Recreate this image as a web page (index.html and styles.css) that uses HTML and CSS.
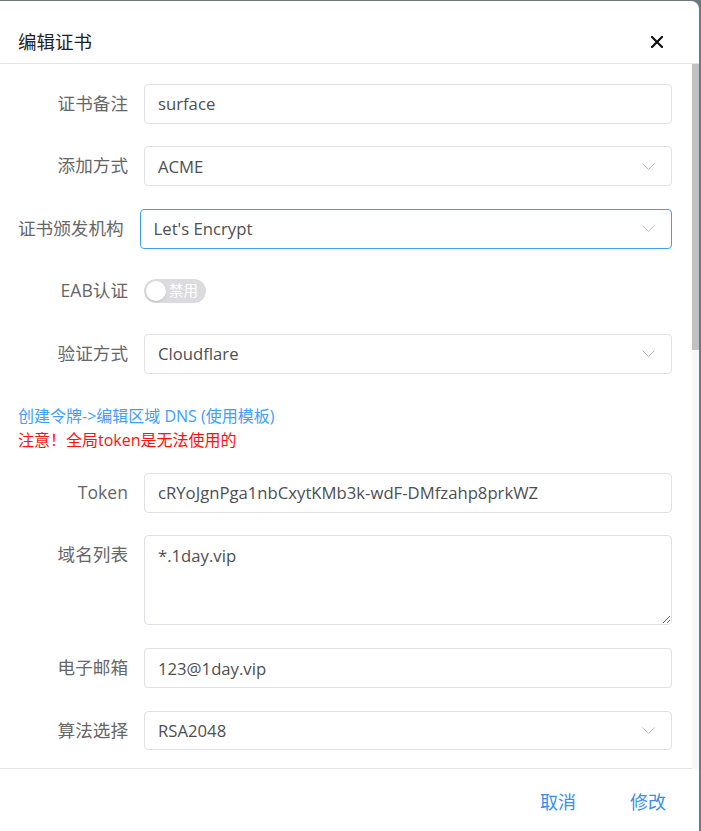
FILE: index.html
```html
<!doctype html>
<html>

<head>
    <meta charset="utf-8">
    <title>编辑证书</title>
    <link rel="stylesheet" href="styles.css">
</head>

<body>
    <div class="dialog">
        <div class="dialog-header">
            <span class="dialog-title">编辑证书</span>
            <span class="close">
                <svg width="12" height="12" viewBox="0 0 12 12">
                    <path d="M1 1L11 11M11 1L1 11" stroke="#111" stroke-width="2.2" stroke-linecap="square" fill="none" />
                </svg>
            </span>
        </div>

        <div class="dialog-body">
            <div class="form">
                <div class="row">
                    <div class="label">证书备注</div>
                    <div class="field">surface</div>
                </div>
                <div class="row">
                    <div class="label">添加方式</div>
                    <div class="field select">
                        <span>ACME</span>
                        <svg class="arrow" width="13" height="7" viewBox="0 0 13 7"><path d="M0.5 0.5L6.5 6.5L12.5 0.5" /></svg>
                    </div>
                </div>
                <div class="row">
                    <div class="label long">证书颁发机构</div>
                    <div class="field select focus">
                        <span>Let's Encrypt</span>
                        <svg class="arrow" width="13" height="7" viewBox="0 0 13 7"><path d="M0.5 0.5L6.5 6.5L12.5 0.5" /></svg>
                    </div>
                </div>
                <div class="row">
                    <div class="label">EAB认证</div>
                    <div class="switch">
                        <span class="knob"></span>
                        <span class="switch-text">禁用</span>
                    </div>
                </div>
                <div class="row">
                    <div class="label">验证方式</div>
                    <div class="field select">
                        <span>Cloudflare</span>
                        <svg class="arrow" width="13" height="7" viewBox="0 0 13 7"><path d="M0.5 0.5L6.5 6.5L12.5 0.5" /></svg>
                    </div>
                </div>

                <div class="notes">
                    <div class="note-link">创建令牌-&gt;编辑区域 DNS (使用模板)</div>
                    <div class="note-warn">注意！全局token是无法使用的</div>
                </div>

                <div class="row">
                    <div class="label">Token</div>
                    <div class="field">cRYoJgnPga1nbCxytKMb3k-wdF-DMfzahp8prkWZ</div>
                </div>
                <div class="row top">
                    <div class="label">域名列表</div>
                    <textarea class="textarea" readonly>*.1day.vip</textarea>
                </div>
                <div class="row">
                    <div class="label">电子邮箱</div>
                    <div class="field">123@1day.vip</div>
                </div>
                <div class="row">
                    <div class="label">算法选择</div>
                    <div class="field select">
                        <span>RSA2048</span>
                        <svg class="arrow" width="13" height="7" viewBox="0 0 13 7"><path d="M0.5 0.5L6.5 6.5L12.5 0.5" /></svg>
                    </div>
                </div>
            </div>
        </div>

        <!-- scrollbar of the body, drawn since the shot's browser hides native ones -->
        <div class="scrollbar"><div class="thumb"></div></div>

        <div class="dialog-footer">
            <span class="btn">取消</span>
            <span class="btn">修改</span>
        </div>
    </div>
</body>

</html>
```

FILE: styles.css
```css
html,
body {
    margin: 0;
    padding: 0;
    width: 100%;
    height: 100%;
    overflow: hidden;
}

* {
    box-sizing: border-box;
}

body {
    padding-top: 1px;
    background: #6d7881;
    font-family: "Open Sans", "Noto Sans CJK SC", sans-serif;
}

.dialog {
    position: relative;
    display: flex;
    flex-direction: column;
    width: 699px;
    height: 830px;
    background: #fff;
    border-top-right-radius: 8px;
}

.dialog-header {
    display: flex;
    align-items: center;
    justify-content: space-between;
    padding: 29px 36px 9px 18px;
    border-bottom: 1px solid #e4e4e7;
}

.dialog-title {
    font-size: 18.5px;
    line-height: 24px;
    color: #1f2225;
}

.close {
    display: flex;
}

.dialog-body {
    flex: 1;
    overflow: hidden;
}

.scrollbar {
    position: absolute;
    top: 63px;
    right: 0;
    width: 7px;
    height: 705px;
    background: #f7f7f7;
}

.thumb {
    height: 286px;
    background: #c1c1c1;
}

.form {
    padding: 20px 27px 0 18px;
}

.row {
    display: flex;
    align-items: center;
    min-height: 39.6px;
    margin-bottom: 22.9px;
}

.row.top {
    align-items: flex-start;
}

.label {
    flex-shrink: 0;
    min-width: 110px;
    margin-right: 16px;
    text-align: right;
    white-space: nowrap;
    font-size: 17.6px;
    line-height: 39.6px;
    color: #666;
}

.label.long {
    min-width: 0;
}

.field {
    flex: 1;
    display: flex;
    align-items: center;
    height: 39.6px;
    padding: 0 16px 0 13px;
    border: 1px solid #e0e0e6;
    border-radius: 4px;
    font-size: 16.7px;
    color: #4d4f52;
    white-space: nowrap;
}

.select {
    justify-content: space-between;
}

.field.focus {
    border-color: #409eff;
}

.arrow path {
    fill: none;
    stroke: #b9b9be;
    stroke-width: 1;
}

.switch {
    display: flex;
    align-items: center;
    width: 62px;
    height: 24px;
    border-radius: 12px;
    background: #dbdbdf;
}

.knob {
    width: 20px;
    height: 20px;
    margin-left: 2px;
    border-radius: 50%;
    background: #fff;
    box-shadow: 0 1px 2px rgba(0, 0, 0, 0.12);
}

.switch-text {
    margin-left: 3px;
    font-size: 14.5px;
    line-height: 20px;
    color: #fff;
}

.notes {
    margin-bottom: 21px;
    padding-top: 7.5px;
    font-size: 16px;
    line-height: 24px;
}

.note-link {
    color: #409eff;
}

.note-warn {
    color: #ff1010;
}

.textarea {
    flex: 1;
    height: 90px;
    margin: 0;
    padding: 8px 13px;
    border: 1px solid #e0e0e6;
    border-radius: 4px;
    font-family: inherit;
    font-size: 16.7px;
    line-height: 24px;
    color: #4d4f52;
    resize: vertical;
    outline: none;
}

.dialog-footer {
    display: flex;
    justify-content: flex-end;
    gap: 54px;
    height: 63px;
    padding: 21px 33px 0;
    border-top: 1px solid #e4e4e7;
}

.btn {
    font-size: 18px;
    line-height: 24px;
    color: #3a8ee6;
    cursor: pointer;
}
```
